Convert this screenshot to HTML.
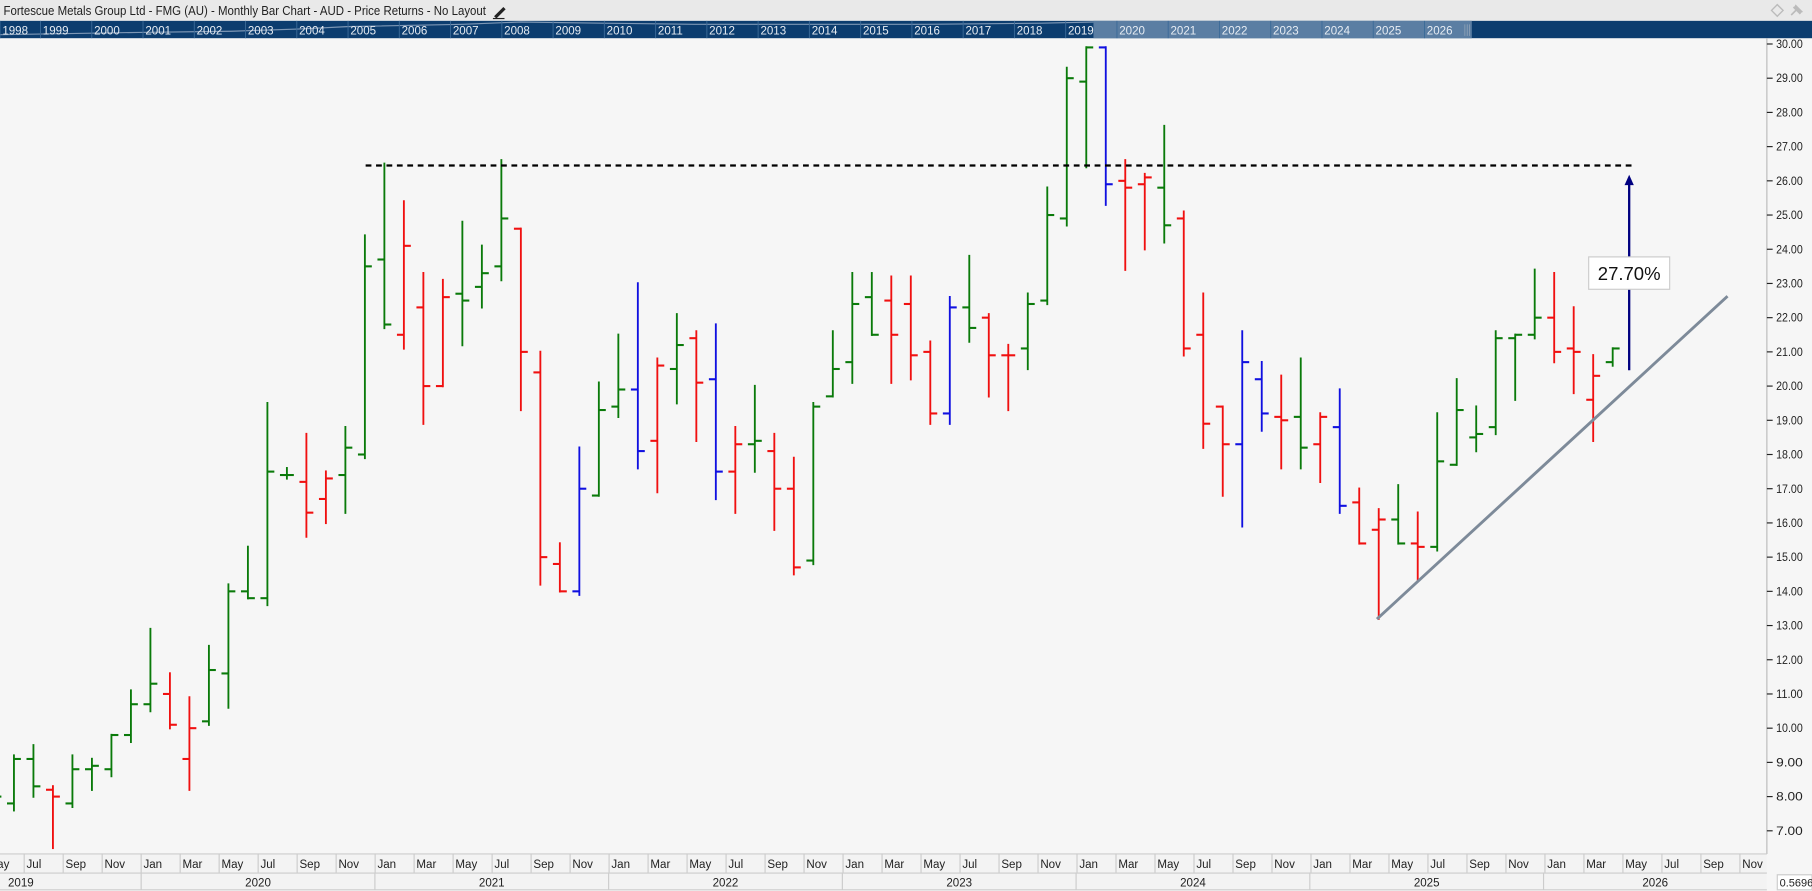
<!DOCTYPE html>
<html><head><meta charset="utf-8"><style>
html,body{margin:0;padding:0;background:#f6f6f6;overflow:hidden}
svg{display:block}
text{font-family:"Liberation Sans",sans-serif}
</style></head><body>
<svg id="s" width="1812" height="891" viewBox="0 0 1566 770" xmlns="http://www.w3.org/2000/svg">
<rect x="0" y="0" width="1566" height="770" fill="#f6f6f6"/>
<rect x="0" y="0" width="1566" height="18" fill="#e9e9e9"/>
<text x="3" y="13" font-size="11" fill="#222" textLength="417" lengthAdjust="spacingAndGlyphs">Fortescue Metals Group Ltd - FMG (AU) - Monthly Bar Chart - AUD - Price Returns - No Layout</text>
<path d="M427 14 L435 6 L437 8 L429 16 Z" fill="#222"/><line x1="426" y1="16" x2="436" y2="16" stroke="#222" stroke-width="1"/>
<path d="M1531 9 L1536 4 L1541 9 L1536 14 Z" fill="none" stroke="#bbb" stroke-width="1.2"/>
<path d="M1548 13 L1552 9 M1550 6 L1556 12 M1552 5 L1557 10 L1555 11 L1551 7 Z" stroke="#bbb" stroke-width="1.5" fill="#bbb"/>
<rect x="0" y="18" width="1566" height="15" fill="#0c3d6f"/>
<rect x="945" y="18" width="327" height="15" fill="#5b7ea3"/>
<path d="M0 30 L60 29 L120 28 L200 27 L260 25 L300 23 L400 21 L450 19 L520 20 L600 21 L700 21 L800 21 L900 20 L945 19" fill="none" stroke="#7d97b5" stroke-width="1"/>
<g id="nav" font-size="10" fill="#e6ecf3"></g>
<line x1="1266" y1="21" x2="1266" y2="31" stroke="#9ab" stroke-width="0.6"/><line x1="1268" y1="21" x2="1268" y2="31" stroke="#9ab" stroke-width="0.6"/><line x1="1270" y1="21" x2="1270" y2="31" stroke="#9ab" stroke-width="0.6"/>
<line x1="1527" y1="33" x2="1527" y2="738" stroke="#bbb" stroke-width="1"/>
<g id="yax" font-size="10" fill="#222"></g>
<g id="bars"></g>
<line x1="316" y1="143" x2="1413" y2="143" stroke="#000" stroke-width="2" stroke-dasharray="5,4"/>
<line x1="1190" y1="535" x2="1493" y2="256" stroke="#7d8a99" stroke-width="2.5"/>
<line x1="1408" y1="320" x2="1408" y2="158" stroke="#000080" stroke-width="2"/>
<path d="M1404 160 L1408 151 L1412 160 Z" fill="#000080"/>
<rect x="1373" y="222" width="70" height="28" fill="#fff" stroke="#ccc" stroke-width="1"/>
<text x="1408" y="242" font-size="16" text-anchor="middle" fill="#111">27.70%</text>
<rect x="0" y="738" width="1527" height="31" fill="#f3f3f3"/>
<line x1="0" y1="738" x2="1527" y2="738" stroke="#ccc"/>
<line x1="0" y1="754.5" x2="1527" y2="754.5" stroke="#ccc"/>
<line x1="0" y1="769" x2="1527" y2="769" stroke="#ccc"/>
<g id="xax" font-size="10" fill="#222"></g>
<rect x="1536" y="756" width="30" height="13" fill="#fff" stroke="#ccc"/>
<text x="1538" y="766" font-size="9.5" fill="#222">0.5696</text>
</svg>
<script>
var NS="http://www.w3.org/2000/svg";
function el(p,t,a,txt){var e=document.createElementNS(NS,t);for(var k in a)e.setAttribute(k,a[k]);if(txt)e.textContent=txt;document.getElementById(p).appendChild(e);}
function Y(p){return 38+(30-p)*29.565;}
for(var i=0;i<=28;i++){var x=i==0?0:35+(i-1)*44.3;el("nav","text",{x:x+2,y:30},String(1998+i));el("nav","line",{x1:x,y1:18,x2:x,y2:33,stroke:"#3b6a98","stroke-width":0.8});}
for(var p=30;p>=7;p--){var y=Y(p);el("yax","line",{x1:1527,y1:y,x2:1532,y2:y,stroke:"#222"});el("yax","text",{x:1535,y:y+3.5,textLength:23,lengthAdjust:"spacingAndGlyphs"},p.toFixed(2));}
var mn=["Jan","Mar","May","Jul","Sep","Nov"];
for(var k=-4;k<42;k++){var x=122+16.85*2*k;if(x>1526)break;var m=((k%6)+6)%6;
 el("xax","line",{x1:x,y1:738,x2:x,y2:754,stroke:"#ccc"});
 el("xax","text",{x:x+2,y:750},mn[m]);}
for(var yr=2019;yr<=2026;yr++){var x0=122+202*(yr-2020),x1=x0+202;
 if(yr>2019)el("xax","line",{x1:x0,y1:754,x2:x0,y2:769,stroke:"#ccc"});
 var cx=yr==2019?18:(x0+Math.min(x1,1527))/2;el("xax","text",{x:cx,y:766,"text-anchor":"middle"},String(yr));}
var G="#0a7a0a",R="#f01010",B="#1010e0";
var d=[[8.1,7.7,7.8,8.0,G],[9.2,7.6,7.8,9.1,G],[9.5,8.0,9.1,8.3,G],[8.3,6.5,8.2,8.0,R],[9.2,7.7,7.8,8.8,G],[9.1,8.2,8.8,8.9,G],[9.8,8.6,8.8,9.8,G],[11.1,9.6,9.8,10.7,G],
[12.9,10.5,10.7,11.3,G],[11.6,10.0,11.0,10.1,R],[10.9,8.2,9.1,10.0,R],[12.4,10.1,10.2,11.7,G],[14.2,10.6,11.6,14.0,G],[15.3,13.8,14.0,13.8,G],[19.5,13.6,13.8,17.5,G],[17.6,17.3,17.4,17.4,G],[18.6,15.6,17.2,16.3,R],[17.5,16.0,16.7,17.3,R],[18.8,16.3,17.4,18.2,G],[24.4,17.9,18.0,23.5,G],
[26.5,21.7,23.7,21.8,G],[25.4,21.1,21.5,24.1,R],[23.3,18.9,22.3,20.0,R],[23.1,20.0,20.0,22.6,R],[24.8,21.2,22.7,22.5,G],[24.1,22.3,22.9,23.3,G],[26.6,23.1,23.5,24.9,G],[24.6,19.3,24.6,21.0,R],[21.0,14.2,20.4,15.0,R],[15.4,14.0,14.8,14.0,R],[18.2,13.9,14.0,17.0,B],[20.1,16.8,16.8,19.3,G],
[21.5,19.1,19.4,19.9,G],[23.0,17.6,19.9,18.1,B],[20.8,16.9,18.4,20.6,R],[22.1,19.5,20.5,21.2,G],[21.6,18.4,21.4,20.1,R],[21.8,16.7,20.2,17.5,B],[18.8,16.3,17.5,18.3,R],[20.0,17.5,18.3,18.4,G],[18.6,15.8,18.1,17.0,R],[17.9,14.5,17.0,14.7,R],[19.5,14.8,14.9,19.4,G],[21.6,19.7,19.7,20.5,G],
[23.3,20.1,20.7,22.4,G],[23.3,21.5,22.6,21.5,G],[23.2,20.1,22.5,21.5,R],[23.2,20.2,22.4,20.9,R],[21.3,18.9,21.0,19.2,R],[22.6,18.9,19.2,22.3,B],[23.8,21.3,22.3,21.7,G],[22.1,19.7,22.0,20.9,R],[21.2,19.3,20.9,20.9,R],[22.7,20.5,21.1,22.4,G],[25.8,22.4,22.5,25.0,G],[29.3,24.7,24.9,29.0,G],
[29.9,26.4,28.9,29.9,G],[29.9,25.3,29.9,25.9,B],[26.6,23.4,26.0,25.8,R],[26.2,24.0,25.9,26.1,R],[27.6,24.2,25.8,24.7,G],[25.1,20.9,24.9,21.1,R],[22.7,18.2,21.5,18.9,R],[19.4,16.8,19.4,18.3,R],[21.6,15.9,18.3,20.7,B],[20.7,18.7,20.2,19.2,B],[20.3,17.6,19.1,19.0,R],[20.8,17.6,19.1,18.2,G],
[19.2,17.2,18.3,19.1,R],[19.9,16.3,18.8,16.5,B],[17.0,15.4,16.6,15.4,R],[16.4,13.2,15.8,16.1,R],[17.1,15.4,16.1,15.4,G],[16.3,14.3,15.4,15.3,R],[19.2,15.2,15.3,17.8,G],[20.2,17.7,17.7,19.3,G],[19.4,18.1,18.5,18.6,G],[21.6,18.6,18.8,21.4,G],[21.5,19.6,21.4,21.5,G],[23.4,21.4,21.5,22.0,G],
[23.3,20.7,22.0,21.0,R],[22.3,19.8,21.1,21.0,R],[20.9,18.4,19.6,20.3,R],[21.1,20.6,20.7,21.1,G]];
for(var i=0;i<d.length;i++){var m=i-8;var x=122+16.85*m+8;if(x<-5)continue;var b=d[i];
 el("bars","line",{x1:x,y1:Y(b[0])-1,x2:x,y2:Y(b[1])+1,stroke:b[4],"stroke-width":1.6});
 el("bars","line",{x1:x-6,y1:Y(b[2]),x2:x,y2:Y(b[2]),stroke:b[4],"stroke-width":1.8});
 el("bars","line",{x1:x,y1:Y(b[3]),x2:x+6,y2:Y(b[3]),stroke:b[4],"stroke-width":1.8});}
</script>
</body></html>
